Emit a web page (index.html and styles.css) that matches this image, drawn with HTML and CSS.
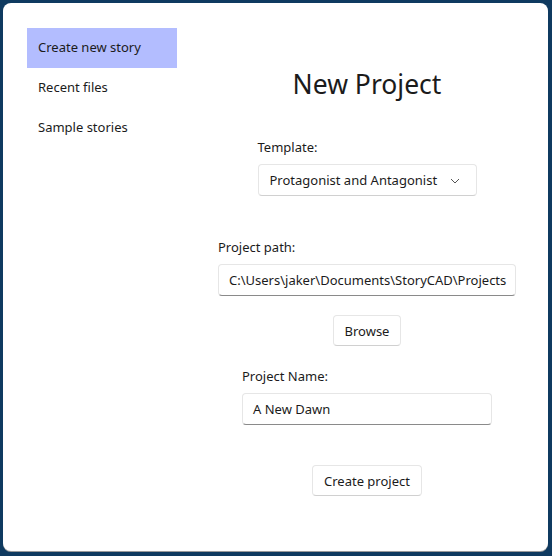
FILE: index.html
```html
<!DOCTYPE html>
<html>
<head>
<meta charset="utf-8">
<link rel="stylesheet" href="styles.css">
</head>
<body>
<div class="dialog">
  <nav class="sidebar">
    <div class="nav-item selected">Create new story</div>
    <div class="nav-item">Recent files</div>
    <div class="nav-item">Sample stories</div>
  </nav>
  <main class="main">
    <h1 class="title">New Project</h1>
    <div class="group group-template">
      <label class="label">Template:</label>
      <div class="combo">
        <span>Protagonist and Antagonist</span>
        <svg class="chev" width="10" height="6" viewBox="0 0 10 6"><path d="M1 1 L5 5 L9 1" fill="none" stroke="#555" stroke-width="1"/></svg>
      </div>
    </div>
    <div class="group group-path">
      <label class="label">Project path:</label>
      <div class="textbox">C:\Users\jaker\Documents\StoryCAD\Projects</div>
    </div>
    <button class="btn btn-browse">Browse</button>
    <div class="group group-name">
      <label class="label">Project Name:</label>
      <div class="textbox">A New Dawn</div>
    </div>
    <button class="btn btn-create">Create project</button>
  </main>
</div>
</body>
</html>
```
FILE: styles.css
```css
html, body {
  margin: 0;
  padding: 0;
  background: #0f3a60;
  width: 552px;
  height: 556px;
  overflow: hidden;
}
body {
  font-family: "Noto Sans", "Open Sans", sans-serif;
  font-size: 13px;
  color: #1b1b1b;
}
.dialog {
  margin: 3px 0 0 3px;
  width: 545px;
  height: 548px;
  background: #fff;
  border-radius: 8px;
  box-shadow: 0 1px 0 #9a9a9a;
  display: flex;
  box-sizing: border-box;
}
.sidebar {
  width: 183px;
  padding: 25px 0 0 24px;
  box-sizing: border-box;
  display: flex;
  flex-direction: column;
}
.nav-item {
  width: 150px;
  height: 40px;
  line-height: 39px;
  padding-left: 11px;
  box-sizing: border-box;
}
.nav-item.selected {
  background: #b3bdff;
}
.main {
  flex: 1;
  display: flex;
  flex-direction: column;
  align-items: center;
  padding-top: 62px;
}
.title {
  margin: 0;
  font-weight: 400;
  font-size: 26.5px;
  line-height: 38px;
  height: 38px;
}
.group {
  display: flex;
  flex-direction: column;
}
.label {
  line-height: 20px;
  margin-bottom: 7px;
}
.group-template { margin-top: 34px; width: 219px; }
.group-path { margin-top: 41px; width: 298px; }
.group-name { margin-top: 20px; width: 250px; }
.combo {
  height: 32px;
  box-sizing: border-box;
  border: 1px solid #e6e6e6;
  border-bottom-color: #d0d0d0;
  border-radius: 4px;
  display: flex;
  align-items: center;
  justify-content: space-between;
  padding: 0 16px 0 11px;
}
.chev { margin-top: 1px; }
.textbox {
  height: 32px;
  box-sizing: border-box;
  border: 1px solid #e6e6e6;
  border-bottom: 1px solid #8a8a8a;
  border-radius: 4px;
  padding: 0 10px;
  line-height: 30px;
  white-space: nowrap;
  overflow: hidden;
}
.btn {
  font-family: inherit;
  font-size: 13px;
  color: #1b1b1b;
  background: #fff;
  border: 1px solid #e6e6e6;
  border-bottom-color: #d0d0d0;
  border-radius: 4px;
  height: 31px;
  padding: 0 11px;
}
.btn-browse { margin-top: 19px; }
.btn-create { margin-top: 40px; }
```
